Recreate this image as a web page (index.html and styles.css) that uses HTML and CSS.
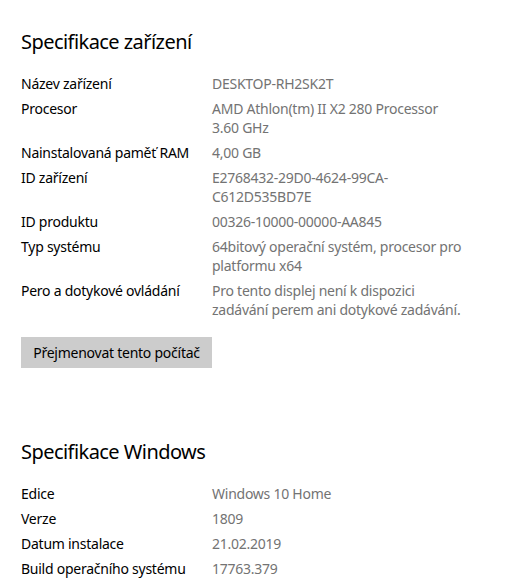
FILE: index.html
```html
<!DOCTYPE html>
<html lang="cs">
<head>
<meta charset="utf-8">
<title>Specifikace</title>
<link rel="stylesheet" href="styles.css">
</head>
<body>
<main class="page">
  <section class="section">
    <h2 class="title">Specifikace zařízení</h2>
    <dl class="specs">
      <div class="row"><dt>Název zařízení</dt><dd>DESKTOP-RH2SK2T</dd></div>
      <div class="row"><dt>Procesor</dt><dd>AMD Athlon(tm) II X2 280 Processor<br>3.60 GHz</dd></div>
      <div class="row"><dt>Nainstalovaná paměť RAM</dt><dd>4,00 GB</dd></div>
      <div class="row"><dt>ID zařízení</dt><dd>E2768432-29D0-4624-99CA-<br>C612D535BD7E</dd></div>
      <div class="row"><dt>ID produktu</dt><dd>00326-10000-00000-AA845</dd></div>
      <div class="row"><dt>Typ systému</dt><dd>64bitový operační systém, procesor pro<br>platformu x64</dd></div>
      <div class="row"><dt>Pero a dotykové ovládání</dt><dd>Pro tento displej není k dispozici<br>zadávání perem ani dotykové zadávání.</dd></div>
    </dl>
    <button class="btn" type="button">Přejmenovat tento počítač</button>
  </section>
  <section class="section second">
    <h2 class="title">Specifikace Windows</h2>
    <dl class="specs">
      <div class="row"><dt>Edice</dt><dd>Windows 10 Home</dd></div>
      <div class="row"><dt>Verze</dt><dd>1809</dd></div>
      <div class="row"><dt>Datum instalace</dt><dd>21.02.2019</dd></div>
      <div class="row"><dt>Build operačního systému</dt><dd>17763.379</dd></div>
    </dl>
  </section>
</main>
</body>
</html>
```
FILE: styles.css
```css
* { box-sizing: border-box; }
html, body { margin: 0; padding: 0; background: #ffffff; }
body {
  font-family: "Noto Sans", "Open Sans", sans-serif;
  color: #000000;
  font-size: 14px;
  letter-spacing: -0.25px;
}
.page {
  padding: 28px 0 0 21px;
  width: 514px;
}
.title {
  margin: 0;
  font-size: 20px;
  font-weight: 400;
  line-height: 28px;
  letter-spacing: -0.55px;
  color: #000;
}
.specs {
  margin: 18px 0 0 0;
  display: flex;
  flex-direction: column;
  gap: 6px;
}
.row {
  display: grid;
  grid-template-columns: 191px 1fr;
  line-height: 19px;
}
.row dt { margin: 0; color: #000; }
.row dd { margin: 0; color: #737373; }
.btn {
  margin-top: 18px;
  width: 191px;
  height: 31px;
  border: 0;
  background: #cccccc;
  font-family: inherit;
  font-size: 14px;
  letter-spacing: -0.25px;
  color: #000;
  padding: 0;
}
.second { margin-top: 70px; }
```
